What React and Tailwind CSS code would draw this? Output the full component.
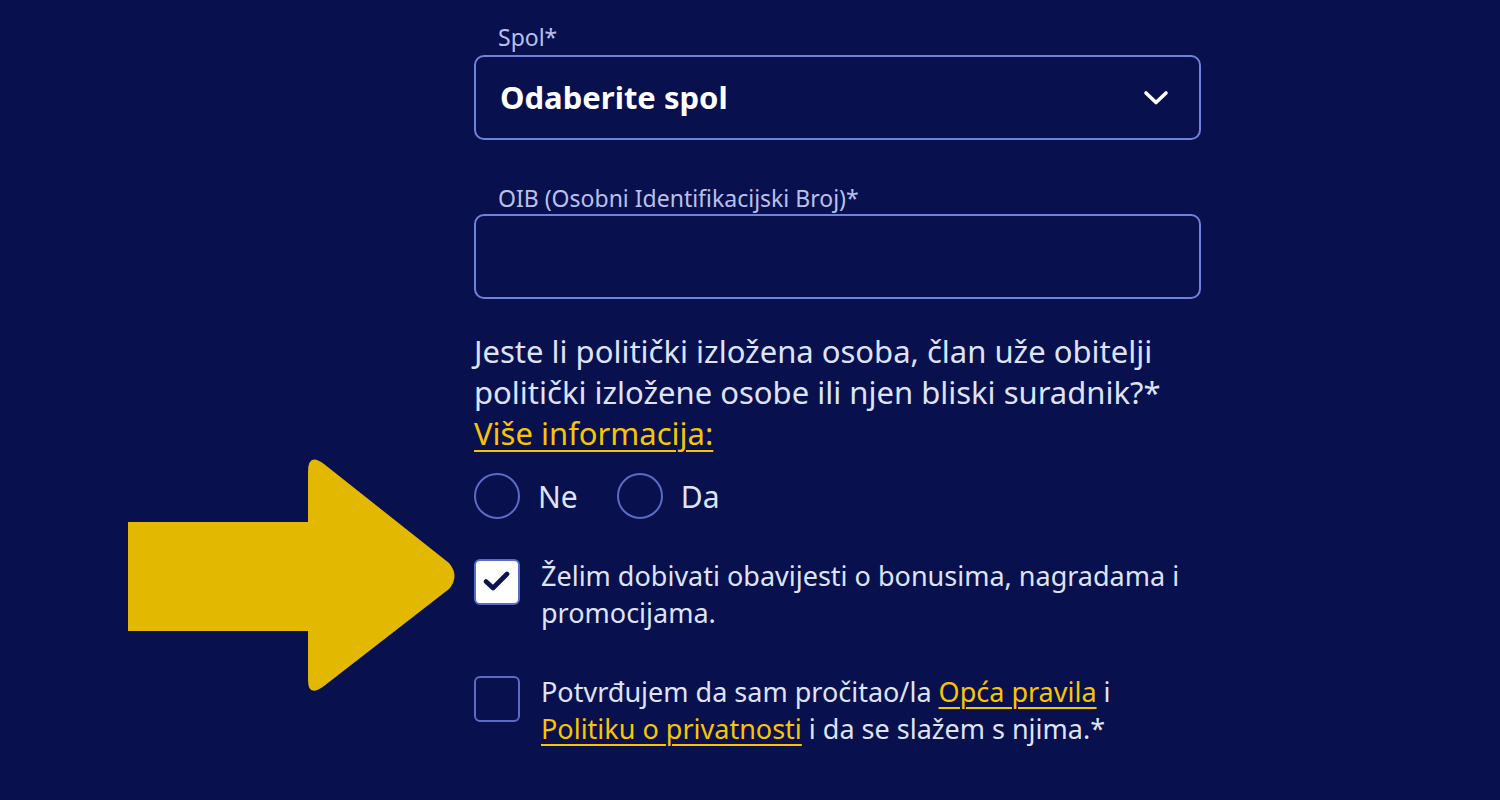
function Arrow() {
  return (
    <svg className="absolute left-0 top-0" width="480" height="720" viewBox="0 0 480 720">
      <path
        d="M128 522 H308 V472 Q308 452 324 464 L449 563 Q460 576 449 589 L324 686 Q308 698 308 680 V631 H128 Z"
        fill="#e3b800"
      />
    </svg>
  )
}

function Chevron() {
  return (
    <svg width="26" height="16" viewBox="0 0 26 16" fill="none">
      <polyline points="3,3 13,12.5 23,3" stroke="white" strokeWidth="3.6" strokeLinecap="round" strokeLinejoin="round" />
    </svg>
  )
}

function Tick() {
  return (
    <svg width="42" height="42" viewBox="0 0 42 42" fill="none">
      <polyline points="10,20.5 17,27 31,13" stroke="#0b1450" strokeWidth="4.6" strokeLinecap="round" strokeLinejoin="round" />
    </svg>
  )
}

export default function App() {
  return (
    <div className="relative min-h-[800px] w-full overflow-hidden bg-[#09104e] font-['Noto_Sans',sans-serif]">
      <Arrow />
      <div className="w-[727px] ml-[474px] pt-[22px] flex flex-col">
        <label className="pl-6 text-[23px] leading-[30px] text-[#b9c0ec]">Spol*</label>
        <div className="mt-[3px] h-[85px] rounded-[10px] border-2 border-[#6f83dc] flex items-center justify-between pl-[24px] pr-[30px]">
          <span className="text-[31px] font-bold text-white">Odaberite spol</span>
          <Chevron />
        </div>

        <label className="mt-[43px] pl-6 text-[23px] leading-[30px] text-[#b9c0ec]">
          OIB (Osobni Identifikacijski Broj)*
        </label>
        <div className="mt-px h-[85px] rounded-[10px] border-2 border-[#6f83dc]" />

        <p className="mt-[32px] text-[31px] leading-[41px] text-[#dfe3f8]">
          Jeste li politički izložena osoba, član uže obitelji politički izložene osobe ili njen bliski suradnik?*
          <br />
          <a className="text-[#f7c600] underline underline-offset-[5px] decoration-2">Više informacija:</a>
        </p>

        <div className="mt-[19px] flex items-center">
          <div className="flex items-center">
            <span className="w-[46px] h-[46px] rounded-full border-2 border-[#5a6cc6]" />
            <span className="ml-[18px] text-[30px] text-[#dfe3f8]">Ne</span>
          </div>
          <div className="ml-[39px] flex items-center">
            <span className="w-[46px] h-[46px] rounded-full border-2 border-[#5a6cc6]" />
            <span className="ml-[18px] text-[30px] text-[#dfe3f8]">Da</span>
          </div>
        </div>

        <div className="mt-[38px] flex items-start">
          <span className="mt-[2px] shrink-0 w-[46px] h-[46px] rounded-[6px] bg-white border-2 border-[#5a6cc6] flex items-center justify-center">
            <Tick />
          </span>
          <p className="ml-[21px] text-[27px] leading-[37px] text-[#dfe3f8]">
            Želim dobivati obavijesti o bonusima, nagradama i promocijama.
          </p>
        </div>

        <div className="mt-[42px] flex items-start">
          <span className="mt-[3px] shrink-0 w-[46px] h-[46px] rounded-[6px] border-2 border-[#5a6cc6]" />
          <p className="ml-[21px] text-[27px] leading-[37px] text-[#dfe3f8]">
            Potvrđujem da sam pročitao/la{' '}
            <a className="text-[#f7c600] underline underline-offset-[5px] decoration-2">Opća pravila</a> i{' '}
            <a className="text-[#f7c600] underline underline-offset-[5px] decoration-2">Politiku o privatnosti</a> i da se slažem s njima.*
          </p>
        </div>
      </div>
    </div>
  )
}
